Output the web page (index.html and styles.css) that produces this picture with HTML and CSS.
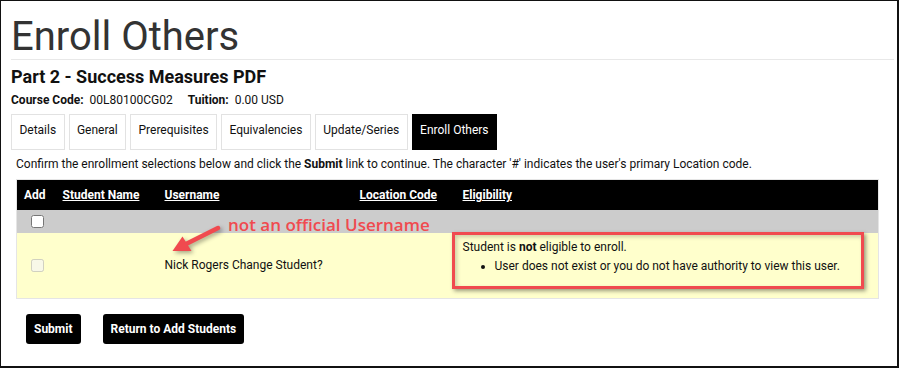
FILE: index.html
```html
<!DOCTYPE html>
<html lang="en">
<head>
    <meta charset="UTF-8">
    <meta name="viewport" content="width=device-width, initial-scale=1.0">
    <title>Enroll Others</title>
    <link rel="stylesheet" href="styles.css">
</head>
<body>
    <div class="frame">
        <h1 class="page-title">Enroll Others</h1>
        <h2 class="course-title">Part 2 - Success Measures PDF</h2>
        <div class="course-meta">
            <span class="meta-item"><span class="meta-label">Course Code:</span> 00L80100CG02</span>
            <span class="meta-item"><span class="meta-label">Tuition:</span> 0.00 USD</span>
        </div>

        <div class="tabs">
            <a class="tab">Details</a>
            <a class="tab">General</a>
            <a class="tab">Prerequisites</a>
            <a class="tab">Equivalencies</a>
            <a class="tab">Update/Series</a>
            <a class="tab active">Enroll Others</a>
        </div>

        <p class="intro">Confirm the enrollment selections below and click the <b>Submit</b> link to continue. The character '#' indicates the user's primary Location code.</p>

        <div class="enroll-wrap">
            <table class="enroll-table">
                <colgroup>
                    <col class="col-add">
                    <col class="col-name">
                    <col class="col-user">
                    <col class="col-loc">
                    <col>
                </colgroup>
                <thead>
                    <tr>
                        <th>Add</th>
                        <th><a>Student Name</a></th>
                        <th><a>Username</a></th>
                        <th><a>Location Code</a></th>
                        <th><a>Eligibility</a></th>
                    </tr>
                </thead>
                <tbody>
                    <tr class="row-all">
                        <td><input type="checkbox" class="row-check"></td>
                        <td></td>
                        <td></td>
                        <td></td>
                        <td></td>
                    </tr>
                    <tr class="row-warn">
                        <td><input type="checkbox" class="row-check" disabled></td>
                        <td></td>
                        <td>Nick Rogers Change Student?</td>
                        <td></td>
                        <td class="eligibility">
                            <p>Student is <b>not</b> eligible to enroll.</p>
                            <ul>
                                <li>User does not exist or you do not have authority to view this user.</li>
                            </ul>
                        </td>
                    </tr>
                </tbody>
            </table>

            <!-- annotations drawn over the table -->
            <span class="note-text">not an official Username</span>
            <svg class="note-arrow" width="70" height="40" viewBox="0 0 70 40">
                <line x1="58" y1="8" x2="26" y2="24" stroke="#f04a4f" stroke-width="4.5" stroke-linecap="round"/>
                <polygon points="12.5,31 22.5,16.5 31.5,31" fill="#f04a4f"/>
            </svg>
            <div class="note-box"></div>
        </div>

        <div class="actions">
            <button class="btn">Submit</button>
            <button class="btn">Return to Add Students</button>
        </div>
    </div>
</body>
</html>
```

FILE: styles.css
```css
body {
    margin: 0;
    font-family: Roboto, 'Liberation Sans', Arial, sans-serif;
    color: #111;
    background-color: #fff;
}
.frame {
    box-sizing: border-box;
    width: 899px;
    height: 368px;
    border: 1px solid #111;
    border-right-width: 2px;
    border-bottom-width: 2px;
    padding: 14px 3px 0 10px;
}
.page-title {
    margin: 0;
    font-size: 40px;
    font-weight: 400;
    line-height: 44px;
    color: #333;
    border-bottom: 1px solid #e8e8e8;
}
.course-title {
    margin: 7px 0 0;
    font-size: 18px;
    line-height: 20px;
    font-weight: 700;
}
.course-meta {
    margin-top: 5px;
    font-size: 12px;
    line-height: 16px;
}
.meta-item {
    margin-right: 12px;
}
.meta-label {
    font-weight: 700;
    margin-right: 3px;
}
.tabs {
    display: flex;
    gap: 4px;
    margin-top: 6px;
}
.tab {
    box-sizing: border-box;
    height: 36px;
    padding: 7px 7.4px 0;
    border: 1px solid #e2e2e2;
    font-size: 12px;
    line-height: 16px;
    color: #111;
}
.tab.active {
    background-color: #000;
    border-color: #000;
    color: #fff;
}
.intro {
    margin: 6px 0 0 5px;
    font-size: 12px;
    line-height: 16px;
}
.enroll-wrap {
    position: relative;
    width: 863px;
    margin: 7px 0 0 5px;
}
.enroll-table {
    width: 863px;
    border-collapse: collapse;
    table-layout: fixed;
    border: 1px solid #e5e5e5;
    font-size: 12px;
}
.col-add { width: 39px; }
.col-name { width: 102px; }
.col-user { width: 195px; }
.col-loc { width: 103px; }
.enroll-table th {
    height: 30px;
    padding: 0 7px;
    background-color: #000;
    color: #fff;
    text-align: left;
    font-weight: 700;
}
.enroll-table th a {
    text-decoration: underline;
}
.enroll-table td {
    padding: 0 7px;
}
.row-all {
    height: 23px;
}
.row-all td {
    background-color: #cccccc;
}
.row-warn {
    height: 65px;
}
.row-warn td {
    background-color: #ffffcc;
}
.row-check {
    display: block;
    width: 13px;
    height: 13px;
    margin: 0 0 0 7px;
}
.eligibility {
    vertical-align: top;
    padding-top: 5px !important;
    line-height: 19px;
}
.eligibility p {
    margin: 0;
}
.eligibility ul {
    margin: 0;
    padding-left: 32px;
}
.note-text {
    position: absolute;
    left: 212px;
    top: 36px;
    font-family: 'Open Sans', sans-serif;
    font-weight: 600;
    font-size: 17px;
    line-height: 20px;
    color: #f04a4f;
    white-space: nowrap;
}
.note-arrow {
    position: absolute;
    left: 144px;
    top: 41px;
    filter: drop-shadow(2px 2px 2px rgba(0, 0, 0, 0.35));
}
.note-box {
    position: absolute;
    left: 436px;
    top: 53px;
    box-sizing: border-box;
    width: 412px;
    height: 57px;
    border: 3px solid #f04a4f;
    box-shadow: 2px 2px 4px rgba(0, 0, 0, 0.4), inset 2px 2px 4px rgba(0, 0, 0, 0.2);
}
.actions {
    display: flex;
    gap: 22px;
    margin: 15px 0 0 15px;
}
.btn {
    height: 30px;
    padding: 0 8px;
    border: none;
    border-radius: 3px;
    background-color: #000;
    color: #fff;
    font-family: Roboto, 'Liberation Sans', Arial, sans-serif;
    font-size: 12px;
    font-weight: 700;
}
```
